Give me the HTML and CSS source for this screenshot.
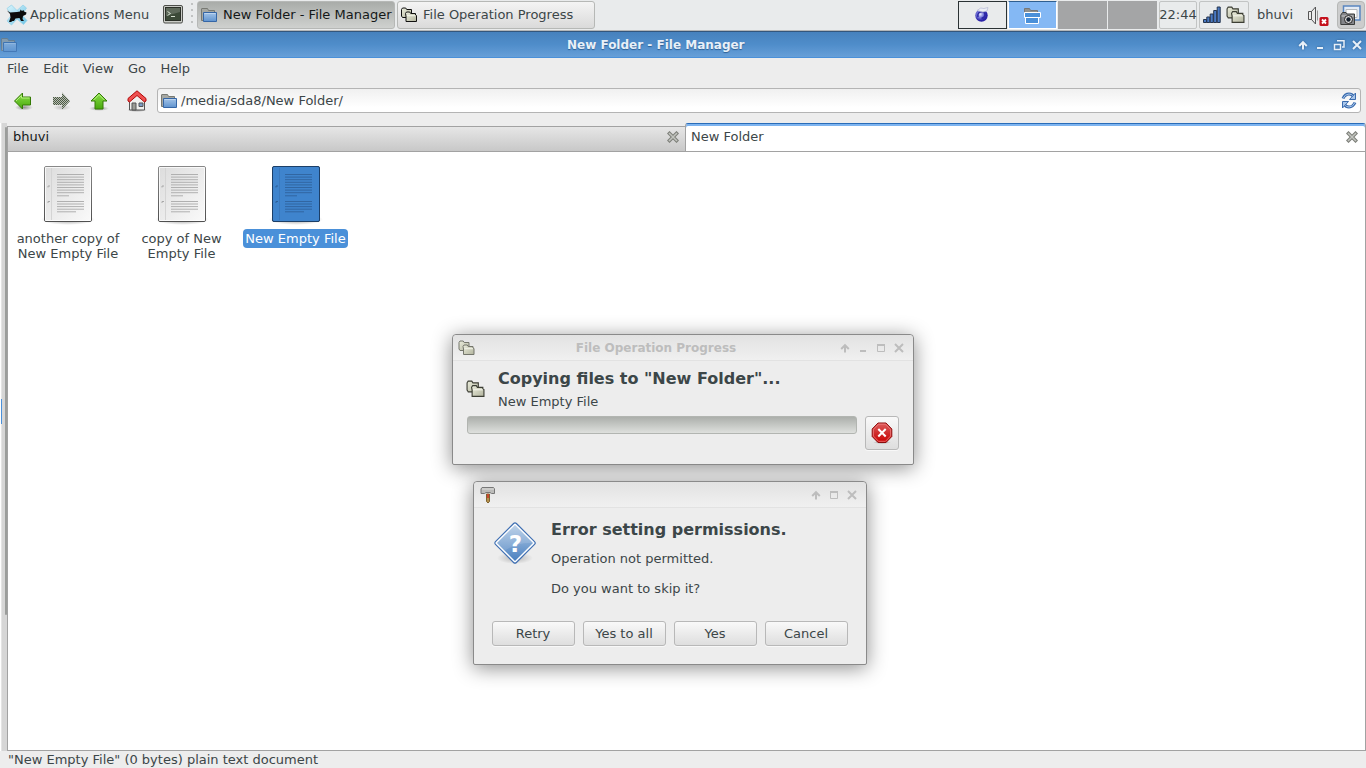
FILE: index.html
```html
<!DOCTYPE html>
<html lang="en">
  <head>
    <meta charset="UTF-8" />
    <title>New Folder - File Manager</title>
    <link rel="stylesheet" href="styles.css">
  </head>
  <body>
    <svg class="defs" width="0" height="0">
      <defs>
        <linearGradient id="paper" x1="0" y1="0" x2="1" y2="1"><stop offset="0" stop-color="#dcdcdc"/><stop offset="1" stop-color="#fafafa"/></linearGradient>
        <linearGradient id="edge" x1="0" y1="0" x2="0" y2="1"><stop offset="0" stop-color="#888"/><stop offset="1" stop-color="#505050"/></linearGradient>
        <linearGradient id="blue" x1="0" y1="0" x2="0" y2="1"><stop offset="0" stop-color="#a4c4e8"/><stop offset="1" stop-color="#5f93cf"/></linearGradient>
        <linearGradient id="olive" x1="0" y1="0" x2="1" y2="1"><stop offset="0" stop-color="#eceedd"/><stop offset="1" stop-color="#b2b49e"/></linearGradient>
        <linearGradient id="green" x1="0" y1="0" x2="0" y2="1"><stop offset="0" stop-color="#8be04a"/><stop offset="1" stop-color="#48a80c"/></linearGradient>
        <linearGradient id="red" x1="0" y1="0" x2="0" y2="1"><stop offset="0" stop-color="#dd5c5c"/><stop offset=".55" stop-color="#cf2a2a"/><stop offset="1" stop-color="#c00"/></linearGradient>
        <linearGradient id="ice" x1="0" y1="0" x2="1" y2="1"><stop offset="0" stop-color="#d8f4fc"/><stop offset="1" stop-color="#6cc4e6"/></linearGradient>
        <linearGradient id="diamond" x1="0" y1="0" x2="0" y2="1"><stop offset="0" stop-color="#b4cce6"/><stop offset="1" stop-color="#4a80c0"/></linearGradient>
        <radialGradient id="shade"><stop offset="0" stop-color="#000" stop-opacity=".4"/><stop offset="1" stop-color="#000" stop-opacity="0"/></radialGradient>
        <radialGradient id="ball" cx=".4" cy=".4"><stop offset="0" stop-color="#e8eafc"/><stop offset=".5" stop-color="#7a7cdc"/><stop offset="1" stop-color="#2a22a8"/></radialGradient>
        <pattern id="dither" width="2" height="2" patternUnits="userSpaceOnUse"><rect width="1" height="1" fill="#4b5b42"/><rect x="1" y="1" width="1" height="1" fill="#4b5b42"/></pattern>
        <symbol id="folder" viewBox="0 0 16 16">
          <path d="M.5 13.500V2q0-.5.5-.5h5.500l1 2h6v10z" fill="#a6a8a3" stroke="#777973"/>
          <path d="M2.500 5.500h13v9h-13z" fill="url(#blue)" stroke="#3566a6"/>
          <path d="M3.500 6.500h11" stroke="#bdd4ee"/>
        </symbol>
        <symbol id="copy" viewBox="0 0 16 16">
          <path d="M1.500 10.500L.5 9V2.500L1.500 1h3.200l1 1.500h4.800v8z" fill="url(#olive)" stroke="currentColor"/>
          <path d="M5 14.500V9l-.5-2.500L5.500 5h3.200l1 1.500h4.800V8l1 .5v6z" fill="url(#olive)" stroke="currentColor"/>
          <path d="M5.800 8.700h8.700" stroke="#f2f3e9"/>
        </symbol>
        <symbol id="tab-x" viewBox="0 0 12 12">
          <path d="M2.500 2.500l7 7M9.500 2.500l-7 7" stroke="#7d7f79" stroke-width="3.600" stroke-linecap="square"/>
          <path d="M2.500 2.500l7 7M9.500 2.500l-7 7" stroke="#c2c4bf" stroke-width="1.500" stroke-linecap="square"/>
        </symbol>
        <symbol id="w-up" viewBox="0 0 10 10"><path d="M5 9.500V3M1.200 6L5 2.200 8.800 6" fill="none" stroke="currentColor" stroke-width="2"/></symbol>
        <symbol id="w-min" viewBox="0 0 10 10"><path d="M2 8h6" stroke="currentColor" stroke-width="2"/></symbol>
        <symbol id="w-max" viewBox="0 0 10 10"><path d="M1.500 2v6.500h7V2" fill="none" stroke="currentColor"/><path d="M1 2h8" stroke="currentColor" stroke-width="2"/></symbol>
        <symbol id="w-restore" viewBox="0 0 12 12"><path d="M4 1.800h7V8H9" fill="none" stroke="currentColor" stroke-width="1.500"/><path d="M1.500 5.500h6v5h-6z" fill="none" stroke="currentColor" stroke-width="1.500"/></symbol>
        <symbol id="w-close" viewBox="0 0 10 10"><path d="M1 1l8 8M9 1L1 9" stroke="currentColor" stroke-width="2"/></symbol>
        <symbol id="doc" viewBox="0 0 54 60">
          <ellipse cx="27" cy="54.500" rx="27" ry="5.500" fill="url(#shade)"/>
          <rect x="3.500" y="1.500" width="47" height="55" rx="1.500" fill="url(#paper)" stroke="url(#edge)"/>
          <path d="M4.500 2.500h45v53h-45z" fill="none" stroke="#fff" stroke-opacity=".75"/>
          <path d="M10.500 3v52" stroke="#d4d4d4"/>
          <path d="M16 9.500h27M16 12.100h27M16 14.700h27M16 17.300h27M16 19.900h27M16 22.500h27M16 25.100h27M16 27.700h27M16 30.800h12M16 36.500h27M16 39h27M16 41.600h27M16 44.200h27M16 46.800h19" stroke="#b0b0b0"/>
          <path d="M7 22.500v-1.500h2M7 38v-1.500h2" fill="none" stroke="#a8a8a8"/>
        </symbol>
      </defs>
    </svg>

    <div class="panel">
      <svg class="mouse" width="22" height="22" viewBox="0 0 22 22">
        <path d="M1 4.500L5.500 1l5.500 5.500L17 1l3.500 3-4.500 7 5 5.500-3.500 4-6.500-5.500-5.500 6L1 17l4.500-6z" fill="url(#ice)" stroke="#8fd0e8" stroke-width=".7"/>
        <path d="M1 6.500l3 2 7-.5 3-.5.500-2 1.500 1.500 1.500-1 .5 1.500 2.500 1-.5 2-3 1.500-.5 3 1.500 2h-3l-1.500-3-4 .5-1.500 2.500H6.500L5 18H3l1.500-4.500L4 10z" fill="#0b0b0b"/>
      </svg>
      <span class="menu-label">Applications Menu</span>
      <svg class="term" width="20" height="19" viewBox="0 0 20 19">
        <rect x=".5" y=".5" width="19" height="17.500" rx="1.500" fill="#c9cbc6" stroke="#4d4f4b"/>
        <rect x="2.500" y="2.500" width="15" height="13" fill="#3c4a38" stroke="#2b3028"/>
        <path d="M3 3h14v4L3 11z" fill="#fff" fill-opacity=".18"/>
        <path d="M4.500 6.500l3 2-3 2M8 11.500h4" fill="none" stroke="#d5dfcf"/>
      </svg>
      <span class="grip"></span>
      <div class="task active"><svg width="16" height="16"><use href="#folder"/></svg>New Folder - File Manager</div>
      <div class="task"><svg class="dark" width="16" height="16"><use href="#copy"/></svg>File Operation Progress</div>
      <div class="pager">
        <div class="desk first">
          <svg width="16" height="17" viewBox="0 0 16 17"><circle cx="7.500" cy="9.500" r="6.200" fill="url(#ball)"/><path d="M4 11q-1-5 4-5.500 3.500.5 3 4-1 3-3.500 2.500" fill="none" stroke="#2b27a4" stroke-width="1.600"/><path d="M3 4.500Q7 .5 10 2.500l4-1-1 3.500-4 1z" fill="#eceef4" stroke="#b4b8d4" stroke-width=".7"/></svg>
        </div>
        <div class="desk current">
          <svg width="18" height="20" viewBox="0 0 18 20"><path d="M1.500 9V2.500h5l1 2h7V9" fill="#8f918e" stroke="#777"/><path d="M1.500 6.500h16v5h-16zM2.500 11.500h13v6h-13z" fill="#4a90d9" stroke="#fff"/></svg>
        </div>
        <div class="desk"></div>
        <div class="desk"></div>
      </div>
      <div class="clock">22:44</div>
      <div class="tray">
        <svg width="18" height="17" viewBox="0 0 18 17"><path d="M.5 13.500h3v3h-3zM3.800 11h3v5.500h-3zM7.200 8h3v8.500h-3zM10.700 4.500h3v12h-3zM14.200 1h3v15.500h-3z" fill="#4a7ac4" stroke="#26354f"/></svg>
        <svg class="big" width="19" height="18"><use href="#copy"/></svg>
      </div>
      <span class="user">bhuvi</span>
      <svg class="sound" width="22" height="20" viewBox="0 0 22 20">
        <path d="M1.500 5.500h3v8h-3zM4.500 5.500L8.500 1v17l-4-4.500z" fill="#ececec" stroke="#555"/><path d="M10.500 4.500v10" stroke="#999"/>
        <rect x="12.500" y="11" width="9" height="9" rx="1.500" fill="#c4101c"/><path d="M15 13.500l4 4M19 13.500l-4 4" stroke="#fff" stroke-width="1.800"/>
      </svg>
      <div class="shot">
        <svg width="22" height="22" viewBox="0 0 22 22"><path d="M3.500 2h16.500v14H3.500z" fill="#e4ebf4" stroke="#5a86c0" stroke-width="1.500"/><path d="M6 5.500h11v8H6z" fill="#fff" stroke="#b4b8bc"/><path d="M.8 11l1.700-2.500h3.500l1 1.500h7.500v10.500H.8z" fill="#84868a" stroke="#3b3d3c"/><path d="M1.500 12h12" stroke="#ccc"/><circle cx="8.500" cy="15.500" r="4" fill="#ddd" stroke="#222"/><circle cx="8.500" cy="15.500" r="2.200" fill="#16202c"/></svg>
      </div>
    </div>

    <div class="titlebar">
      <svg class="ticon" width="16" height="16"><use href="#folder"/></svg>
      <span class="title">New Folder - File Manager</span>
      <div class="controls">
        <svg width="10" height="10"><use href="#w-up"/></svg>
        <svg width="10" height="10"><use href="#w-min"/></svg>
        <svg width="12" height="12"><use href="#w-restore"/></svg>
        <svg width="10" height="10"><use href="#w-close"/></svg>
      </div>
    </div>

    <div class="menubar"><span>File</span><span>Edit</span><span>View</span><span>Go</span><span>Help</span></div>

    <div class="toolbar">
      <svg width="20" height="20" viewBox="0 0 20 20"><ellipse cx="11" cy="16.500" rx="9" ry="3" fill="url(#shade)"/><path d="M1.500 10l8-8v4h8v8h-8v4z" fill="url(#green)" stroke="#347a05"/><path d="M3 10l5.500-5.500V7h8" fill="none" stroke="#b5f07e"/></svg>
      <svg width="20" height="20" viewBox="0 0 20 20"><ellipse cx="11" cy="16.500" rx="9" ry="3" fill="url(#shade)" opacity=".5"/><path d="M19 10l-8-8.500V6H2v8h9v4.500z" fill="#b9bdb6"/><path d="M19 10l-8-8.500V6H2v8h9v4.500z" fill="url(#dither)"/></svg>
      <svg width="20" height="20" viewBox="0 0 20 20"><ellipse cx="10" cy="17.500" rx="10" ry="2.500" fill="url(#shade)"/><path d="M10 2l8 8h-4v8H6v-8H2z" fill="url(#green)" stroke="#347a05"/><path d="M4.500 9.200L10 3.700l5.500 5.500" fill="none" stroke="#b5f07e"/></svg>
      <svg width="20" height="22" viewBox="0 0 20 22"><ellipse cx="10" cy="20" rx="10" ry="2" fill="url(#shade)"/><path d="M2.500 20V10L10 3l7.500 7v10z" fill="#f0f0ee" stroke="#555"/><path d="M5 13h4v7H5z" fill="#9a9b94" stroke="#555"/><path d="M12 13h4v3.500h-4z" fill="#7c9cc8" stroke="#555"/><path d="M1 11V8.500L10 .8l9 7.700V11l-1.500 1L10 5.500 2.500 12z" fill="#ef5050" stroke="#b00808"/></svg>
      <div class="location">
        <svg width="16" height="16"><use href="#folder"/></svg>
        <span>/media/sda8/New Folder/</span>
        <svg class="reload" width="16" height="17" viewBox="0 0 16 17"><path d="M2 6.500Q4 2 8 2q3 0 4.500 2.500" fill="none" stroke="#3b6cae" stroke-width="3"/><path d="M2 6.500Q4 2 8 2q3 0 4.500 2.500" fill="none" stroke="#a9c6ea"/><path d="M14.500 1v6.500H8.500z" fill="#a9c6ea" stroke="#3b6cae"/><path d="M14 10.500Q12 15 8 15q-3 0-4.500-2.500" fill="none" stroke="#3b6cae" stroke-width="3"/><path d="M14 10.500Q12 15 8 15q-3 0-4.500-2.500" fill="none" stroke="#a9c6ea"/><path d="M1.500 16V9.500h6z" fill="#a9c6ea" stroke="#3b6cae"/></svg>
      </div>
    </div>

    <div class="main">
      <div class="side"><span class="focus"></span><span class="handle"></span></div>
      <div class="notebook">
        <div class="tabs">
          <div class="tab back">bhuvi<svg width="12" height="12"><use href="#tab-x"/></svg></div>
          <div class="tab front">New Folder<svg width="12" height="12"><use href="#tab-x"/></svg></div>
        </div>
        <div class="files">
          <div class="file"><svg width="54" height="60"><use href="#doc"/></svg><span>another copy of<br>New Empty File</span></div>
          <div class="file"><svg width="54" height="60"><use href="#doc"/></svg><span>copy of New<br>Empty File</span></div>
          <div class="file selected">
            <svg width="54" height="60" viewBox="0 0 54 60">
              <use href="#doc"/>
              <rect x="3.500" y="1.500" width="47" height="55" rx="1.500" fill="#3f84cd" stroke="#1c3f68"/>
              <path d="M10.500 3v52" stroke="#3a78bc"/>
              <path d="M16 9.500h27M16 12.100h27M16 14.700h27M16 17.300h27M16 19.900h27M16 22.500h27M16 25.100h27M16 27.700h27M16 30.800h12M16 36.500h27M16 39h27M16 41.600h27M16 44.200h27M16 46.800h19" stroke="#3166a2"/>
              <path d="M7 22.500v-1.500h2M7 38v-1.500h2" fill="none" stroke="#2c5f98"/>
            </svg>
            <span>New Empty File</span>
          </div>
        </div>
      </div>
    </div>
    <div class="status">"New Empty File" (0 bytes) plain text document</div>

    <div class="dialog progress">
      <div class="dlg-title">
        <svg class="faded" width="17" height="16"><use href="#copy"/></svg>
        <span class="dlg-name">File Operation Progress</span>
        <div class="controls">
          <svg width="10" height="10"><use href="#w-up"/></svg>
          <svg width="10" height="10"><use href="#w-min"/></svg>
          <svg width="10" height="10"><use href="#w-max"/></svg>
          <svg width="10" height="10"><use href="#w-close"/></svg>
        </div>
      </div>
      <div class="dlg-body">
        <div class="op">
          <svg class="big" width="19" height="18"><use href="#copy"/></svg>
          <div>
            <h2>Copying files to "New Folder"...</h2>
            <p>New Empty File</p>
          </div>
        </div>
        <div class="op-row">
          <div class="bar"></div>
          <div class="btn stop">
            <svg width="22" height="22" viewBox="0 0 22 22"><ellipse cx="11" cy="20.500" rx="9" ry="1.500" fill="url(#shade)"/><path d="M7 1h8l5.800 6v7.500L15 20.500H7L1.200 14.500V7z" fill="url(#red)" stroke="#8c0c0c"/><path d="M7.500 2.200h7L19.600 7.500v6.500l-5.100 5.300h-7L2.400 14V7.500z" fill="none" stroke="#ef8080" stroke-width=".8"/><path d="M7.300 7l7.400 7.500M14.700 7l-7.400 7.500" stroke="#fff" stroke-width="2"/></svg>
          </div>
        </div>
      </div>
    </div>

    <div class="dialog error">
      <div class="dlg-title">
        <svg width="17" height="18" viewBox="0 0 17 18"><path d="M7.500 8h3v7.500L9 17l-1.500-1.500z" fill="#b5904c" stroke="#7c6230"/><path d="M8 8h2v4H8z" fill="#c84a30"/><path d="M3 1.500h11.500l1 1.500v4.500h-3l-1.500-1h-4l-1.500 1H2V3z" fill="#bcbcba" stroke="#777"/><path d="M3 3h12" stroke="#dcdcda"/></svg>
        <span class="dlg-name"></span>
        <div class="controls">
          <svg width="10" height="10"><use href="#w-up"/></svg>
          <svg width="10" height="10"><use href="#w-max"/></svg>
          <svg width="10" height="10"><use href="#w-close"/></svg>
        </div>
      </div>
      <div class="dlg-body">
        <div class="message">
          <svg width="44" height="46" viewBox="0 0 44 46">
            <ellipse cx="22" cy="38" rx="18" ry="6" fill="url(#shade)" opacity=".6"/>
            <rect x="7.200" y="8.200" width="29.600" height="29.600" rx="2" transform="rotate(45 22 23)" fill="#fff" stroke="#3f6fb2" stroke-width="1.200"/>
            <path d="M22 5L40 23 22 41 4 23z" fill="url(#diamond)"/>
            <path d="M4 23L22 5 40 23Q24 22 12 30.500z" fill="#fff" fill-opacity=".12"/>
            <text class="mark" x="22.500" y="32">?</text>
          </svg>
          <div>
            <h2>Error setting permissions.</h2>
            <p>Operation not permitted.</p>
            <p>Do you want to skip it?</p>
          </div>
        </div>
        <div class="buttons">
          <div class="btn">Retry</div>
          <div class="btn">Yes to all</div>
          <div class="btn">Yes</div>
          <div class="btn">Cancel</div>
        </div>
      </div>
    </div>
  </body>
</html>
```
FILE: styles.css
```css
* {
  box-sizing: border-box;
}
body {
  margin: 0;
  width: 1366px;
  height: 768px;
  overflow: hidden;
  display: flex;
  flex-direction: column;
  background: #ededed;
  color: #3c4648;
  font: 13px/15px "DejaVu Sans", sans-serif;
  white-space: nowrap;
}
svg {
  flex: none;
  display: block;
}
.defs {
  position: absolute;
}
.dark {
  color: #111;
}
.big {
  color: #3c3e34;
}
.faded {
  color: #74766c;
}

/* top panel */
.panel {
  height: 31px;
  padding: 1px 1px 3px 6px;
  display: flex;
  align-items: center;
  background: #e9ebec;
  border-bottom: 1px solid #b4b6b8;
  padding-bottom: 2px;
}
.menu-label {
  width: 127px;
  margin-left: 2px;
}
.term {
  margin-left: 6px;
}
.grip {
  width: 2px;
  height: 24px;
  margin: 0 4px 0 8px;
  background: repeating-linear-gradient(#c0c2c2 0 2px, transparent 2px 6px);
}
.task {
  width: 198px;
  height: 28px;
  margin-right: 2px;
  padding-left: 3px;
  display: flex;
  align-items: center;
  gap: 6px;
  border: 1px solid #b6b8b6;
  border-radius: 3px;
  background: linear-gradient(#f4f4f4, #dadada);
}
.task.active {
  color: #141818;
  background: linear-gradient(#a9aca9, #cfd1cf);
}
.pager {
  display: flex;
  gap: 1px;
  margin-left: auto;
}
.desk {
  width: 49px;
  height: 28px;
  display: flex;
  align-items: center;
  justify-content: center;
  background: #a4a5a6;
}
.desk.first {
  border: 1px solid #2a3234;
  background: #e9ebec;
}
.desk.first svg {
  margin-right: 2px;
}
.desk.current {
  padding: 3px 2px 0 0;
  background: #84b8f4;
  border: 1px solid #fff;
  border-top-color: #2f5f90;
}
.clock,
.tray {
  height: 28px;
  margin-left: 2px;
  display: flex;
  align-items: center;
  justify-content: center;
  border: 1px solid #c2c4c4;
  border-radius: 2px;
}
.clock {
  width: 38px;
}
.tray {
  width: 50px;
  gap: 5px;
}
.user {
  width: 36px;
  margin-left: 8px;
}
.sound {
  margin: 3px 8px 0 14px;
}
.shot {
  width: 28px;
  height: 28px;
  display: flex;
  align-items: center;
  justify-content: center;
  border: 1px solid #b6b8b6;
  border-radius: 4px;
  background: #cccdcd;
}

/* window title */
.titlebar {
  height: 27px;
  padding: 0 4px 0 1px;
  display: flex;
  align-items: center;
  border-top: 1px solid #34567c;
  border-bottom: 1px solid #4a90d9;
  background: linear-gradient(#4681bd, #4f8dca 50%, #679fd8);
  color: #e8f0f8;
}
.ticon {
  opacity: .6;
}
.title {
  flex: 1;
  padding: 2px 3px 0 0;
  text-align: center;
  font-weight: bold;
  font-size: 12px;
  text-shadow: 0 1px 1px #2d5f94;
}
.controls {
  display: flex;
  align-items: center;
  gap: 8px;
}
.titlebar .controls {
  gap: 7.500px;
}
.titlebar .controls svg {
  filter: drop-shadow(0 0 1px #2d5f94);
}

.menubar {
  height: 23px;
  padding: 3px 7px;
  display: flex;
  gap: 14.400px;
}
.toolbar {
  height: 42px;
  padding: 7px 5px 10px 13px;
  display: flex;
  align-items: center;
  gap: 18px;
}
.location {
  flex: 1;
  height: 25px;
  margin-left: -8px;
  padding: 0 3px;
  display: flex;
  align-items: center;
  gap: 4px;
  border: 1px solid #b4b4b4;
  border-radius: 3px;
  background: linear-gradient(#f0f0f0, #fff 80%);
}
.reload {
  margin-left: auto;
}

/* side pane edge and tabs */
.main {
  flex: 1;
  display: flex;
}
.side {
  width: 7px;
  padding-left: 2px;
  position: relative;
  background: linear-gradient(90deg, #fff 0 1px, #e4e4e4 1px 2px, #d6d6d6 2px);
}
.handle {
  display: block;
  width: 2px;
  height: 488px;
  margin: 4px 0 0 3px;
  border-radius: 2px;
  background: #9b9d9b;
}
.focus {
  position: absolute;
  left: 1px;
  top: 276px;
  width: 1px;
  height: 25px;
  background: #4a90d9;
}
.notebook {
  flex: 1;
  display: flex;
  flex-direction: column;
}
.tabs {
  height: 29px;
  display: flex;
  align-items: flex-end;
}
.tab {
  display: flex;
  justify-content: space-between;
  border-left: 1px solid #a2a2a2;
  border-bottom: 1px solid #a2a2a2;
}
.tab.back {
  width: 678px;
  height: 26px;
  padding: 2px 6px 0 5px;
  border-top: 1px solid #a2a2a2;
  background: linear-gradient(#e6e6e6, #c8c8c8);
  color: #141818;
}
.tab.front {
  flex: 1;
  height: 29px;
  padding: 5px 7px 0 5px;
  border-top: 1px solid #2a6cb8;
  border-right: 1px solid #a2a2a2;
  border-radius: 3px 3px 0 0;
  background: #fff;
  box-shadow: inset 0 2px #7db4f0;
}
.tab svg {
  margin-top: 2px;
}
.files {
  flex: 1;
  padding-top: 13px;
  display: flex;
  background: #fff;
  border: 1px solid #a2a2a2;
  border-top: 0;
}
.file {
  width: 114px;
  padding-left: 6px;
  display: flex;
  flex-direction: column;
  align-items: center;
  gap: 6px;
  text-align: center;
}
.file span {
  padding: 0 2px;
}
.file + .file span {
  margin-left: -1px;
}
.file.selected span {
  height: 19px;
  margin-top: -2px;
  padding: 2px 2px 0;
  border-radius: 4px;
  background: #4a90d9;
  color: #fff;
}
.status {
  height: 17px;
  padding: 1px 8px;
}

/* dialogs */
.dialog {
  position: absolute;
  border: 1px solid #8a8a8a;
  border-radius: 4px 4px 2px 2px;
  background: #ededed;
  box-shadow: 0 3px 20px rgba(0, 0, 0, .45);
}
.progress {
  left: 452px;
  top: 334px;
  width: 462px;
  height: 131px;
}
.error {
  left: 473px;
  top: 481px;
  width: 394px;
  height: 184px;
}
.dlg-title {
  height: 26px;
  padding: 0 9px 0 5px;
  display: flex;
  align-items: center;
  border-bottom: 1px solid #e2e2e2;
  border-radius: 4px 4px 0 0;
  background: linear-gradient(#e2e2e2, #f0f0f0);
  color: #bdbdbd;
}
.dlg-name {
  flex: 1;
  padding: 2px 3px 0 0;
  text-align: center;
  font-size: 12px;
  font-weight: bold;
}
.dlg-body {
  height: 103px;
  margin: 0 5px;
  background: #ededed;
}
h2 {
  margin: 0;
  font-size: 16px;
  line-height: 19px;
}
p {
  margin: 0;
}
.op {
  padding: 8px 0 0 8px;
  display: flex;
  align-items: center;
  gap: 13px;
}
.op p {
  margin-top: 6px;
}
.op-row {
  padding: 7px 9px 0;
  display: flex;
  gap: 8px;
}
.bar {
  flex: 1;
  height: 18px;
  border: 1px solid #b2b5b1;
  border-radius: 3px;
  background: linear-gradient(#acafab, #dee0dd);
}
.btn {
  display: flex;
  align-items: center;
  justify-content: center;
  border: 1px solid #b8b8b8;
  border-radius: 3px;
  background: linear-gradient(#f9f9f9, #dedede);
  box-shadow: 0 1px #f8f8f8;
}
.stop {
  width: 34px;
  height: 34px;
}
.message {
  padding: 12px 0 0 14px;
  display: flex;
  gap: 14px;
}
.message p {
  margin: 12px 0 15px;
}
.message p + p {
  margin-bottom: 0;
}
.mark {
  fill: #fff;
  font-size: 23px;
  font-weight: bold;
  text-anchor: middle;
}
.buttons {
  padding: 25px 13px 0;
  display: flex;
  gap: 8px;
}
.buttons .btn {
  flex: 1;
  height: 25px;
  padding-right: 1px;
}
```
